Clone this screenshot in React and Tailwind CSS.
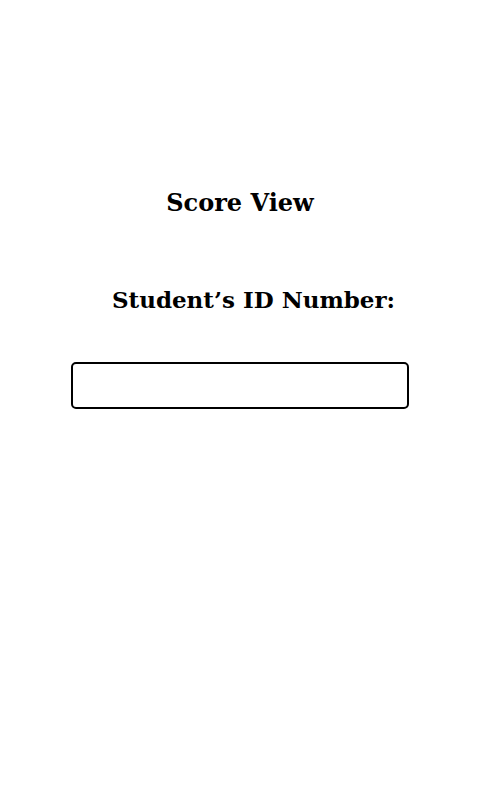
export default function App() {
  return (
    <div className="w-[480px] h-[800px] bg-white flex flex-col items-center" style={{ fontFamily: '"DejaVu Serif", serif' }}>
      <h1 className="mt-[187px] text-[24px] leading-[32px] font-bold text-black">Score View</h1>
      <h2 className="mt-[65px] pl-[27px] text-[23px] leading-[32px] font-bold text-black">Student’s ID Number:</h2>
      <input className="mt-[46px] w-[338px] h-[47px] border-2 border-black rounded-[5px] outline-none" />
    </div>
  );
}
